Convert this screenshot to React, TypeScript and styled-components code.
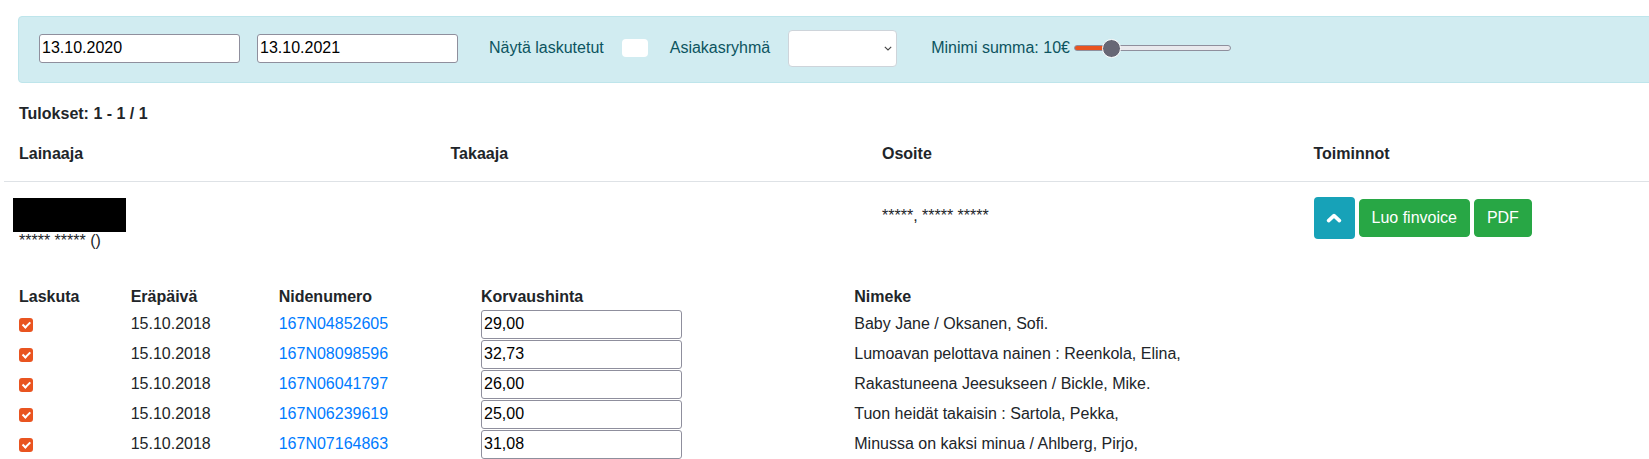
import React from "react";
import styled, { createGlobalStyle } from "styled-components";

type Loan = {
  due: string;
  item: string;
  price: string;
  title: string;
};

const loans: Loan[] = [
  { due: "15.10.2018", item: "167N04852605", price: "29,00", title: "Baby Jane / Oksanen, Sofi." },
  { due: "15.10.2018", item: "167N08098596", price: "32,73", title: "Lumoavan pelottava nainen : Reenkola, Elina," },
  { due: "15.10.2018", item: "167N06041797", price: "26,00", title: "Rakastuneena Jeesukseen / Bickle, Mike." },
  { due: "15.10.2018", item: "167N06239619", price: "25,00", title: "Tuon heidät takaisin : Sartola, Pekka," },
  { due: "15.10.2018", item: "167N07164863", price: "31,08", title: "Minussa on kaksi minua / Ahlberg, Pirjo," },
];

const MIN_SUM = 0;
const MAX_SUM = 50;
const SLIDER_WIDTH = 157;
const THUMB = 19;

const App = () => {
  const minSum = 10;
  const ratio = (minSum - MIN_SUM) / (MAX_SUM - MIN_SUM);
  const fill = ((THUMB / 2 + (SLIDER_WIDTH - THUMB) * ratio) / SLIDER_WIDTH) * 100;

  return (
    <>
      <GlobalStyle />
      <Page>
        <FilterBar>
          <TextInput type="text" defaultValue="13.10.2020" />
          <TextInput type="text" defaultValue="13.10.2021" $offset={17} />
          <FilterLabel $offset={31}>Näytä laskutetut</FilterLabel>
          <Toggle type="checkbox" $offset={18} />
          <FilterLabel $offset={22}>Asiakasryhmä</FilterLabel>
          <SelectWrap>
            <Select defaultValue="">
              <option value=""></option>
            </Select>
            <SelectChevron width="8" height="5" viewBox="0 0 8 5">
              <path d="M0.8 0.8 L4 4 L7.2 0.8" fill="none" stroke="#444" strokeWidth="1.1" />
            </SelectChevron>
          </SelectWrap>
          <FilterLabel $offset={34}>Minimi summa: {minSum}€</FilterLabel>
          <Range
            type="range"
            min={MIN_SUM}
            max={MAX_SUM}
            defaultValue={minSum}
            $fill={fill}
          />
        </FilterBar>

        <ResultCount>Tulokset: 1 - 1 / 1</ResultCount>

        <HeaderRow>
          <HeadCell>Lainaaja</HeadCell>
          <HeadCell>Takaaja</HeadCell>
          <HeadCell>Osoite</HeadCell>
          <HeadCell>Toiminnot</HeadCell>
        </HeaderRow>

        <BorrowerRow>
          <Cell>
            <Redacted />
            <NameLine>***** ***** ()</NameLine>
          </Cell>
          <Cell />
          <Cell>
            <Address>*****, ***** *****</Address>
          </Cell>
          <Cell>
            <Actions>
              <ToggleButton aria-label="Piilota">
                <svg width="16" height="10" viewBox="0 0 16 10">
                  <polyline
                    points="2.6,7.6 8,2.6 13.4,7.6"
                    fill="none"
                    stroke="#fff"
                    strokeWidth="3.6"
                    strokeLinecap="round"
                    strokeLinejoin="round"
                  />
                </svg>
              </ToggleButton>
              <ActionButton>Luo finvoice</ActionButton>
              <ActionButton>PDF</ActionButton>
            </Actions>
          </Cell>
        </BorrowerRow>

        <LoanTable>
          <LoanHead>
            <span>Laskuta</span>
            <span>Eräpäivä</span>
            <span>Nidenumero</span>
            <span>Korvaushinta</span>
            <span>Nimeke</span>
          </LoanHead>
          {loans.map((loan) => (
            <LoanRow key={loan.item}>
              <InvoiceCheck type="checkbox" defaultChecked />
              <span>{loan.due}</span>
              <ItemLink href="#">{loan.item}</ItemLink>
              <TextInput type="text" defaultValue={loan.price} />
              <span>{loan.title}</span>
            </LoanRow>
          ))}
        </LoanTable>
      </Page>
    </>
  );
};

export default App;

const GlobalStyle = createGlobalStyle`
  html, body {
    margin: 0;
    padding: 0;
    overflow: hidden;
    background: #fff;
  }
  body {
    font-family: "Liberation Sans", Arial, sans-serif;
    font-size: 16px;
    line-height: 24px;
    color: #212529;
  }
  *, *::before, *::after {
    box-sizing: border-box;
  }
`;

const Page = styled.div`
  width: 1726px;
  margin-left: 4px;
  padding-top: 16px;
`;

const FilterBar = styled.div`
  display: flex;
  align-items: center;
  height: 67px;
  margin: 0 14px;
  padding: 12px 20px 15px;
  background: #d1ecf1;
  border: 1px solid #bee5eb;
  border-radius: 4px;
  color: #0c5460;
`;

const TextInput = styled.input<{ $offset?: number }>`
  width: 201px;
  height: 29px;
  margin: 0 0 0 ${({ $offset }) => $offset ?? 0}px;
  padding: 0 2px;
  font-family: "Liberation Sans", Arial, sans-serif;
  font-size: 16px;
  color: #000;
  background: #fff;
  border: 1px solid #8f8f9d;
  border-radius: 3px;
  outline: none;
`;

const FilterLabel = styled.span<{ $offset: number }>`
  margin-left: ${({ $offset }) => $offset}px;
  white-space: nowrap;
`;

const Toggle = styled.input<{ $offset: number }>`
  appearance: none;
  width: 26px;
  height: 18px;
  margin: 0 0 0 ${({ $offset }) => $offset}px;
  background: #fff;
  border: none;
  border-radius: 4px;
`;

const SelectWrap = styled.div`
  position: relative;
  margin-left: 18px;
  width: 109px;
  height: 37px;
`;

const Select = styled.select`
  appearance: none;
  width: 100%;
  height: 100%;
  padding: 0 12px;
  font-family: "Liberation Sans", Arial, sans-serif;
  font-size: 16px;
  background: #fff;
  border: 1px solid #ced4da;
  border-radius: 4px;
  outline: none;
`;

const SelectChevron = styled.svg`
  position: absolute;
  right: 5px;
  top: 16px;
  pointer-events: none;
`;

const Range = styled.input<{ $fill: number }>`
  -webkit-appearance: none;
  appearance: none;
  width: ${SLIDER_WIDTH}px;
  height: 6px;
  margin: 0 0 0 4px;
  padding: 0;
  border: 1px solid #8f8f9d;
  border-radius: 3px;
  background: linear-gradient(
    to right,
    #e95420 0 ${({ $fill }) => $fill}%,
    #e9e9ed ${({ $fill }) => $fill}% 100%
  );
  outline: none;

  &::-webkit-slider-thumb {
    -webkit-appearance: none;
    appearance: none;
    width: ${THUMB}px;
    height: ${THUMB}px;
    border-radius: 50%;
    background: #676775;
    border: 1.5px solid #fff;
  }
`;

const ResultCount = styled.div`
  margin-top: 19px;
  padding-left: 15px;
  font-weight: 700;
`;

const HeaderRow = styled.div`
  display: grid;
  grid-template-columns: repeat(4, 431.5px);
  padding: 16px 0 15px;
  border-bottom: 1px solid #dee2e6;
`;

const HeadCell = styled.div`
  padding: 0 15px;
  font-weight: 700;
`;

const BorrowerRow = styled.div`
  display: grid;
  grid-template-columns: repeat(4, 431.5px);
  align-items: start;
`;

const Cell = styled.div`
  padding: 12px 15px;
`;

const Redacted = styled.div`
  width: 113px;
  height: 34px;
  margin: 4px 0 0 -6px;
  background: #000;
`;

const NameLine = styled.div`
  margin-top: -3px;
`;

const Address = styled.div`
  margin-top: 10px;
`;

const Actions = styled.div`
  display: flex;
  align-items: center;
  margin-top: 3px;
`;

const ToggleButton = styled.button`
  display: flex;
  align-items: center;
  justify-content: center;
  width: 41px;
  height: 42px;
  padding: 0;
  background: #17a2b8;
  border: none;
  border-radius: 4px;
`;

const ActionButton = styled.button`
  height: 38px;
  margin-left: 4px;
  padding: 0 12px;
  font-family: "Liberation Sans", Arial, sans-serif;
  font-size: 16px;
  color: #fff;
  background: #28a745;
  border: 1px solid #28a745;
  border-radius: 4px;
`;

const LoanTable = styled.div`
  margin-top: 20px;
  padding-left: 15px;
`;

const loanColumns = "111.7px 148px 202.3px 373.3px 1fr";

const LoanHead = styled.div`
  display: grid;
  grid-template-columns: ${loanColumns};
  font-weight: 700;
`;

const LoanRow = styled.div`
  display: grid;
  grid-template-columns: ${loanColumns};
  align-items: center;
  height: 30px;
`;

const InvoiceCheck = styled.input`
  appearance: none;
  position: relative;
  width: 14px;
  height: 14px;
  margin: 2px 0 0;
  background: #e95420;
  border-radius: 3px;

  &::after {
    content: "";
    position: absolute;
    left: 4.5px;
    top: 1.5px;
    width: 4.5px;
    height: 8px;
    border-right: 2px solid #fff;
    border-bottom: 2px solid #fff;
    transform: rotate(45deg);
  }
`;

const ItemLink = styled.a`
  color: #007bff;
  text-decoration: none;
`;
